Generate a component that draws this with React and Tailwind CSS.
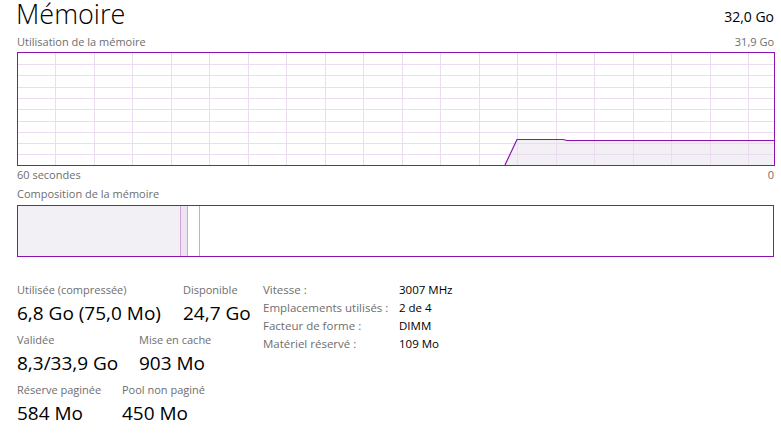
const gridX = Array.from({ length: 19 }, (_, i) => 38 + i * 38.5);
const gridY = Array.from({ length: 9 }, (_, i) => 12 + i * 11.3);

function UsageChart() {
  return (
    <svg width="758" height="114" viewBox="0 0 758 114" className="block mt-[2px]">
      <polygon points="488,113 500,87.3 546,87.3 550,88 757,88 757,113" fill="#f2f0f4" />
      {gridX.map((x) => (
        <line key={x} x1={Math.round(x) + 0.5} y1="0" x2={Math.round(x) + 0.5} y2="114" stroke="#ecdcf1" strokeWidth="1" />
      ))}
      {gridY.map((y) => (
        <line key={y} x1="0" y1={Math.round(y) + 0.5} x2="758" y2={Math.round(y) + 0.5} stroke="#ecdcf1" strokeWidth="1" />
      ))}
      <polyline points="488,113 500,87.5 546,87.5 550,88.5 757,88.5" fill="none" stroke="#8b12ae" strokeWidth="1.2" />
      <rect x="0.5" y="0.5" width="757" height="113" fill="none" stroke="#8b12ae" strokeWidth="1" />
    </svg>
  );
}

function Stat({ label, value, w }) {
  return (
    <div className={`${w} shrink-0`}>
      <div className="text-[11px] leading-[16px] text-[#6e6e6e]">{label}</div>
      <div className="text-[19px] leading-[26px] text-black mt-[2px]">{value}</div>
    </div>
  );
}

const specs = [
  ['Vitesse :', '3007 MHz'],
  ['Emplacements utilisés :', '2 de 4'],
  ['Facteur de forme :', 'DIMM'],
  ['Matériel réservé :', '109 Mo'],
];

export default function App() {
  return (
    <div
      className="w-[781px] h-[446px] bg-white pl-[17px] pr-[7px] overflow-hidden"
      style={{ fontFamily: '"Open Sans", "Noto Sans", sans-serif' }}
    >
      {/* Header */}
      <div className="flex justify-between items-start h-[28px]">
        <h1 className="text-[27px] leading-[30px] -mt-[1px] font-light text-black -ml-[1px]">Mémoire</h1>
        <span className="text-[14px] leading-[20px] text-black mt-[7px]">32,0 Go</span>
      </div>
      <div className="flex justify-between text-[11px] leading-[16px] text-[#6e6e6e] mt-[6px]">
        <span>Utilisation de la mémoire</span>
        <span>31,9 Go</span>
      </div>

      <UsageChart />

      <div className="flex justify-between text-[11px] leading-[16px] text-[#6e6e6e] mt-[1px]">
        <span>60 secondes</span>
        <span>0</span>
      </div>
      <div className="text-[11px] leading-[16px] text-[#6e6e6e] mt-[3px]">Composition de la mémoire</div>

      {/* Composition bar */}
      <div className="flex h-[52px] border border-[#8b12ae] mt-[3px]">
        <div className="w-[163px] bg-[#f2f0f4] border-r border-[#cfa6dc]" />
        <div className="w-[7px] bg-[#eee3f2] border-r border-[#cfa6dc]" />
        <div className="w-[12px] border-r border-[#cfa6dc]" />
        <div className="flex-1" />
      </div>

      {/* Stats */}
      <div className="flex items-start mt-[25px]">
        <div className="w-[246px] flex flex-col gap-[6px]">
          <div className="flex">
            <Stat w="w-[166px]" label="Utilisée (compressée)" value="6,8 Go (75,0 Mo)" />
            <Stat w="w-[80px]" label="Disponible" value="24,7 Go" />
          </div>
          <div className="flex">
            <Stat w="w-[122px]" label="Validée" value="8,3/33,9 Go" />
            <Stat w="w-[110px]" label="Mise en cache" value="903 Mo" />
          </div>
          <div className="flex">
            <Stat w="w-[105px]" label="Réserve paginée" value="584 Mo" />
            <Stat w="w-[110px]" label="Pool non paginé" value="450 Mo" />
          </div>
        </div>
        <div className="grid grid-cols-[136px_auto] auto-rows-[18px] content-start text-[11.5px] leading-[18px] -mt-[1px]">
          {specs.map(([k, v]) => (
            <div key={k} className="contents">
              <span className="text-[#6e6e6e]">{k}</span>
              <span className="text-black">{v}</span>
            </div>
          ))}
        </div>
      </div>
    </div>
  );
}
